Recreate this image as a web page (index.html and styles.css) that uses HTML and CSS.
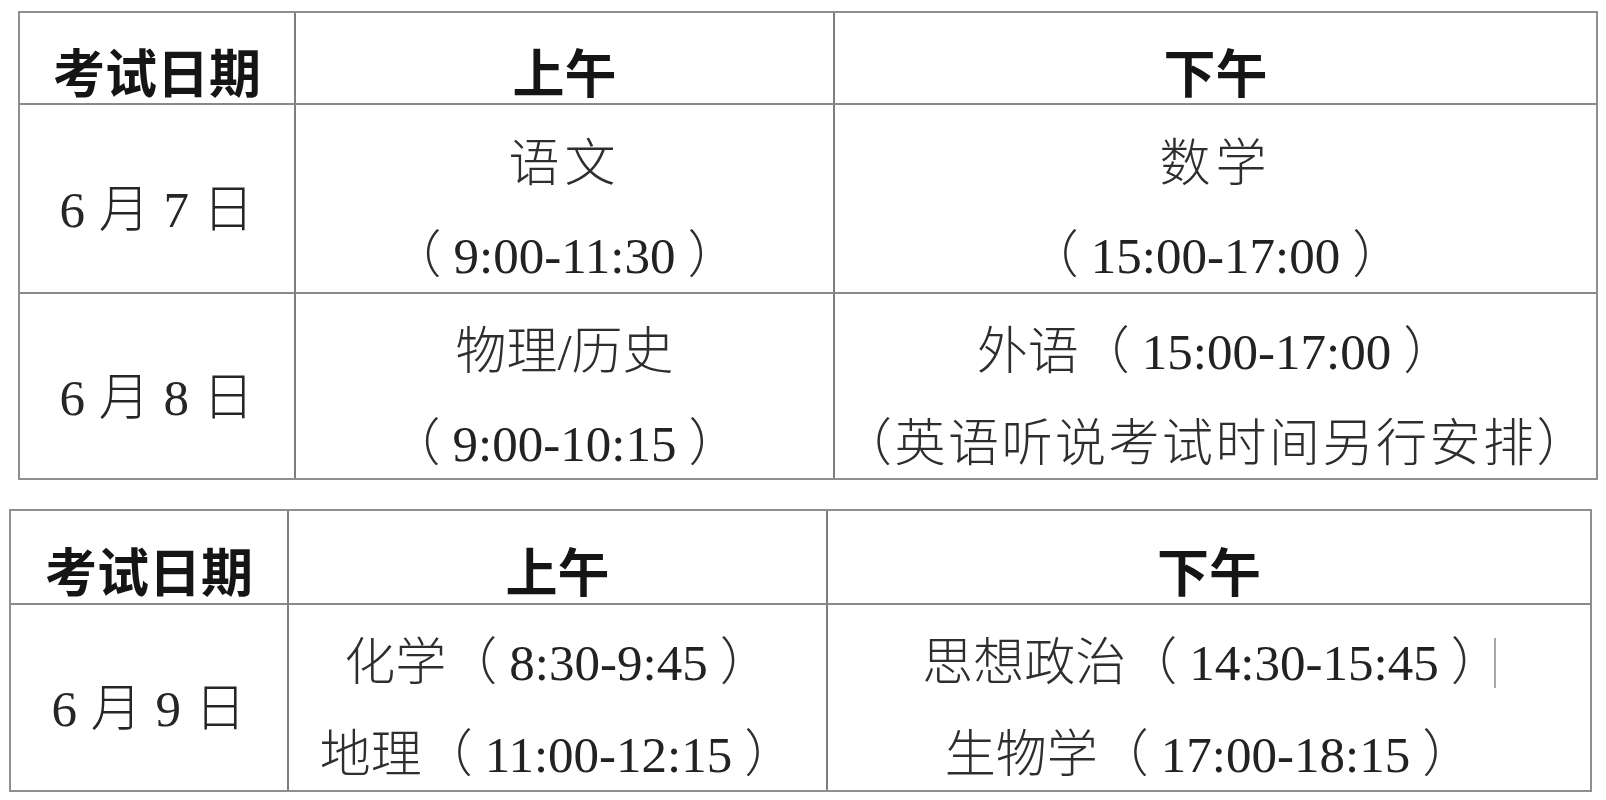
FILE: index.html
```html
<!DOCTYPE html>
<html lang="zh-CN">
<head>
<meta charset="utf-8">
<title>考试时间安排</title>
<link rel="stylesheet" href="styles.css">
</head>
<body>
<main class="page">
  <section class="sched sched-a">
    <div class="cell head">考试日期</div>
    <div class="cell head">上午</div>
    <div class="cell head last">下午</div>

    <div class="cell date">6 月 7 日</div>
    <div class="cell"><p class="line spaced">语文</p><p class="line">（<span class="t">9:00-11:30</span>）</p></div>
    <div class="cell last"><p class="line spaced">数学</p><p class="line">（<span class="t">15:00-17:00</span>）</p></div>

    <div class="cell date bottom">6 月 8 日</div>
    <div class="cell bottom"><p class="line">物理/历史</p><p class="line">（<span class="t">9:00-10:15</span>）</p></div>
    <div class="cell last bottom"><p class="line">外语（<span class="t">15:00-17:00</span>）</p><p class="line wide">（英语听说考试时间另行安排）</p></div>
  </section>

  <section class="sched sched-b">
    <div class="cell head">考试日期</div>
    <div class="cell head">上午</div>
    <div class="cell head last">下午</div>

    <div class="cell date bottom">6 月 9 日</div>
    <div class="cell bottom"><p class="line">化学（<span class="t">8:30-9:45</span>）</p><p class="line">地理（<span class="t">11:00-12:15</span>）</p></div>
    <div class="cell last bottom"><p class="line">思想政治（<span class="t">14:30-15:45</span>）<span class="caret"></span></p><p class="line">生物学（<span class="t">17:00-18:15</span>）</p></div>
  </section>
</main>
</body>
</html>
```
FILE: styles.css
```css
* { box-sizing: border-box; }

html, body {
  margin: 0;
  padding: 0;
  background: #ffffff;
}

.page {
  display: flex;
  flex-direction: column;
  align-items: flex-start;
  padding-top: 11px;
}

.sched {
  display: grid;
  border: 2px solid #8f8f8f;
  background: #fff;
}

.sched-a {
  margin-left: 18px;
  width: 1580px;
  grid-template-columns: 276px 539px 1fr;
  grid-template-rows: 92px 189px 184px;
}

.sched-b {
  margin-left: 9px;
  margin-top: 29px;
  width: 1583px;
  grid-template-columns: 278px 539px 1fr;
  grid-template-rows: 94px 185px;
}

.cell {
  display: flex;
  flex-direction: column;
  align-items: center;
  justify-content: center;
  gap: 41px;
  padding-top: 24px;
  border-right: 2px solid #7e7e7e;
  border-bottom: 2px solid #8a8a8a;
  font-family: "Liberation Serif", "Noto Sans CJK SC", serif;
  font-size: 51px;
  font-weight: 300;
  line-height: 51px;
  color: #2e2e2e;
  white-space: nowrap;
}

.cell.last { border-right: none; }
.cell.bottom { border-bottom: none; }

.head {
  font-family: "Noto Sans CJK SC", "Noto Sans", sans-serif;
  font-size: 52px;
  font-weight: 700;
  color: #151515;
}

.date {
  letter-spacing: 0.5px;
  color: #262626;
}

.line {
  margin: 0;
  line-height: 51px;
}

.t {
  margin: 0 12px;
  color: #222;
}

.spaced { letter-spacing: 5px; }
.wide { letter-spacing: 2.5px; }

.caret {
  display: inline-block;
  width: 0;
  height: 50px;
  margin-left: -8px;
  border-left: 2px solid #a8a8a8;
  vertical-align: -8px;
}
```
